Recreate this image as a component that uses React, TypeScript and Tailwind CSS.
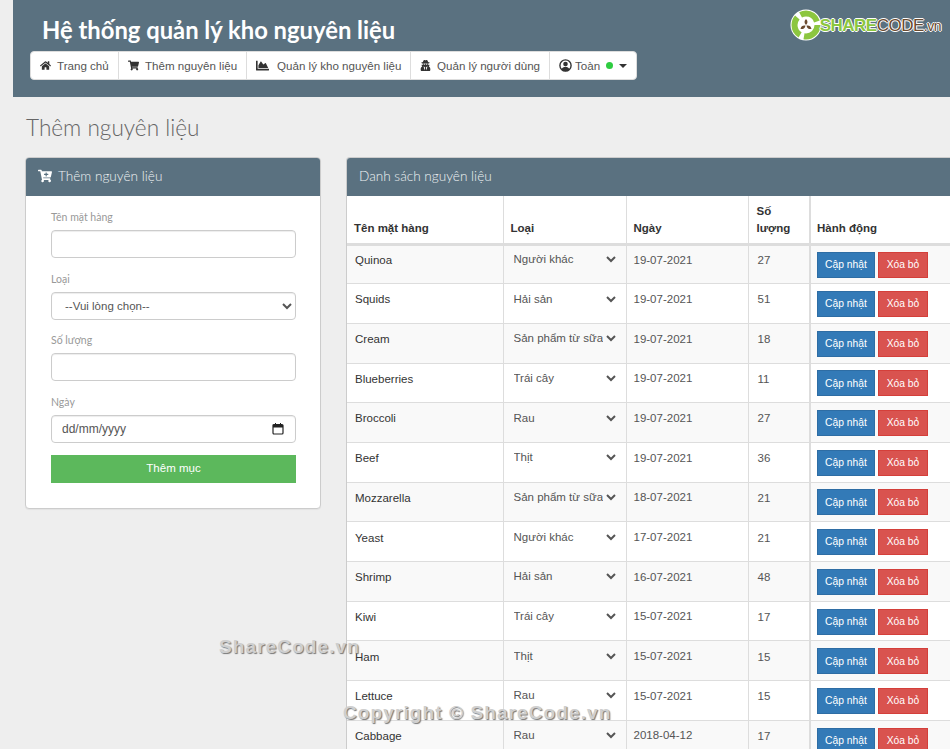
import { FaCartPlus, FaChartArea, FaHome, FaShoppingCart, FaUserSecret } from 'react-icons/fa'

const lato = 'font-["Lato","Open_Sans",sans-serif]'

const navItems = [
  { label: 'Trang chủ', icon: <FaHome className="text-[11px]" />, width: 'w-[88px]', gap: 'gap-[6px]' },
  { label: 'Thêm nguyên liệu', icon: <FaShoppingCart className="text-[11px]" />, width: 'w-[128px]', gap: 'gap-[6px]' },
  { label: 'Quản lý kho nguyên liệu', icon: <FaChartArea className="text-[13px]" />, width: 'w-[164px]', gap: 'gap-[8px]' },
  { label: 'Quản lý người dùng', icon: <FaUserSecret className="text-[11px]" />, width: 'w-[139px]', gap: 'gap-[6px]' },
]

const categories = ['Người khác', 'Hải sản', 'Sản phẩm từ sữa', 'Trái cây', 'Rau', 'Thịt']

const rows = [
  ['Quinoa', 'Người khác', '19-07-2021', '27'],
  ['Squids', 'Hải sản', '19-07-2021', '51'],
  ['Cream', 'Sản phẩm từ sữa', '19-07-2021', '18'],
  ['Blueberries', 'Trái cây', '19-07-2021', '11'],
  ['Broccoli', 'Rau', '19-07-2021', '27'],
  ['Beef', 'Thịt', '19-07-2021', '36'],
  ['Mozzarella', 'Sản phẩm từ sữa', '18-07-2021', '21'],
  ['Yeast', 'Người khác', '17-07-2021', '21'],
  ['Shrimp', 'Hải sản', '16-07-2021', '48'],
  ['Kiwi', 'Trái cây', '15-07-2021', '17'],
  ['Ham', 'Thịt', '15-07-2021', '15'],
  ['Lettuce', 'Rau', '15-07-2021', '15'],
  ['Cabbage', 'Rau', '2018-04-12', '17'],
]

function Logo() {
  return (
    <div className="flex items-center">
      <svg width="32" height="32" viewBox="0 0 32 32">
        <circle cx="16" cy="16" r="15.500" fill="#fff" />
        <circle cx="16" cy="16" r="11.500" fill="none" stroke="#8cc63f" strokeWidth="6" strokeDasharray="20 4.100" />
        <circle cx="16" cy="16" r="7" fill="#fff" />
        <path d="M16 10c2 2 2 4 0 6-2-2-2-4 0-6zM10.500 20c.5-3 2.500-4 5-3.500-.5 3-2.500 4-5 3.500zM21.500 20c-.5-3-2.500-4-5-3.500.5 3 2.500 4 5 3.500z" fill="#6b4a2f" />
      </svg>
      <span className='ml-[-2px] font-["Liberation_Sans",Arial,sans-serif] text-[17px] leading-none tracking-[-0.5px] [text-shadow:1px_0_0_#fff,-1px_0_0_#fff,0_1px_0_#fff,0_-1px_0_#fff]'>
        <span className="font-bold text-[#8cc63f]">SHARE</span>
        <span className="text-[#6b4a2f]">CODE</span>
        <span className="text-[14px] text-[#6b4a2f]">.vn</span>
      </span>
    </div>
  )
}

function UserIcon() {
  return (
    <svg width="13" height="13" viewBox="0 0 13 13" className="mr-[3px] text-[#333]">
      <circle cx="6.500" cy="6.500" r="5.600" fill="none" stroke="currentColor" strokeWidth="1.400" />
      <circle cx="6.500" cy="5" r="2.300" fill="currentColor" />
      <path d="M2.600 10.600c.5-2 2-2.900 3.900-2.900s3.400.9 3.900 2.900c-1 1-2.400 1.600-3.900 1.600s-2.900-.6-3.900-1.600z" fill="currentColor" />
    </svg>
  )
}

function Field({ label, children }: { label: string; children: React.ReactNode }) {
  return (
    <div className="mb-[13.500px]">
      <label className={`${lato} mb-[6px] block h-[14px] text-[10.500px] leading-[14px] text-[#999]`}>{label}</label>
      {children}
    </div>
  )
}

const inputClass = 'block h-[28px] w-full rounded-[4px] border border-[#ccc] bg-white text-[11.500px] text-[#555] shadow-[inset_0_1px_1px_rgba(0,0,0,0.075)]'

function AddForm() {
  return (
    <div className="w-[296px] shrink-0 self-start overflow-hidden rounded-[4px] border border-[#ccc] bg-white shadow-[0_1px_1px_rgba(0,0,0,0.05)]">
      <div className={`${lato} flex h-[38px] items-center gap-[6px] bg-[#5a7180] pb-[2px] pl-[12px] text-[13.600px] font-light text-[#eef1f3]`}>
        <FaCartPlus className="text-[14px] text-white" />
        Thêm nguyên liệu
      </div>
      <div className="pl-[25px] pr-[24px] pt-[14px] pb-[25px]">
        <Field label="Tên mặt hàng">
          <input className={inputClass} />
        </Field>
        <Field label="Loại">
          <select className={`${inputClass} pl-[9px]`} defaultValue="">
            <option value="">--Vui lòng chọn--</option>
            {categories.map((c) => (
              <option key={c}>{c}</option>
            ))}
          </select>
        </Field>
        <Field label="Số lượng">
          <input className={inputClass} />
        </Field>
        <Field label="Ngày">
          <div className="relative">
            <input type="text" placeholder="dd/mm/yyyy" className={`${inputClass} pl-[10px] text-[12px] placeholder:text-[#555]`} />
            <svg width="12" height="12" viewBox="0 0 12 12" className="absolute right-[12px] top-[8px]">
              <rect x="1" y="1.500" width="10" height="9.500" rx="1" fill="none" stroke="#222" strokeWidth="1.200" />
              <rect x="1" y="2" width="10" height="2.500" fill="#222" />
              <path d="M3.500 0v2M8.500 0v2" stroke="#222" strokeWidth="1" />
            </svg>
          </div>
        </Field>
        <button className="mt-[-1px] block h-[28px] w-full bg-[#5cb85c] text-[11.500px] text-white">Thêm mục</button>
      </div>
    </div>
  )
}

function ItemTable() {
  return (
    <div className="w-[640px] shrink-0 self-start rounded-t-[4px] border-x border-t border-[#ccc] bg-white">
      <div className={`${lato} flex h-[38px] items-center rounded-t-[3px] bg-[#5a7180] pb-[2px] pl-[12px] text-[13.600px] font-light text-[#eef1f3]`}>
        Danh sách nguyên liệu
      </div>
      <table className="w-full table-fixed border-collapse text-[11.500px] text-[#333]">
        <colgroup>
          <col className="w-[156px]" />
          <col className="w-[123px]" />
          <col className="w-[122px]" />
          <col className="w-[62px]" />
          <col />
        </colgroup>
        <thead>
          <tr className="h-[48px] border-b-[3px] border-[#ddd]">
            <th className="border-r border-[#ddd] px-[7px] pb-[5px] text-left align-bottom font-bold">Tên mặt hàng</th>
            <th className="border-r border-[#ddd] px-[7px] pb-[5px] text-left align-bottom font-bold">Loại</th>
            <th className="border-r border-[#ddd] px-[7px] pb-[5px] text-left align-bottom font-bold">Ngày</th>
            <th className="border-r-2 border-[#ddd] px-[8px] pb-[6px] text-left align-bottom font-bold leading-[17px]">Số lượng</th>
            <th className="px-[6px] pb-[5px] text-left align-bottom font-bold">Hành động</th>
          </tr>
        </thead>
        <tbody>
          {rows.map((row) => (
            <tr key={row[0]} className="h-[39.700px] border-b border-[#ddd] odd:bg-[#f9f9f9]">
              <td className="border-r border-[#ddd] px-[8px] align-middle">
                <div className="mt-[-7px]">{row[0]}</div>
              </td>
              <td className="border-r border-[#ddd] pl-[2px] pr-[7px] align-middle">
                <select defaultValue={row[1]} className="mt-[-10px] block h-[24px] w-full bg-transparent pl-[4px] text-[11.500px] text-[#555]">
                  {categories.map((c) => (
                    <option key={c}>{c}</option>
                  ))}
                </select>
              </td>
              <td className="border-r border-[#ddd] px-[7px] align-middle text-[#555]">
                <div className="mt-[-8px]">{row[2]}</div>
              </td>
              <td className="border-r-2 border-[#ddd] px-[9px] align-middle text-[#555]">
                <div className="mt-[-7px]">{row[3]}</div>
              </td>
              <td className="px-[6px] align-middle">
                <div className="flex gap-[3px] pt-[1px]">
                  <button className="h-[26px] w-[58px] border border-[#2e6da4] bg-[#337ab7] text-[10.300px] text-white">Cập nhật</button>
                  <button className="h-[26px] w-[50px] border border-[#d43f3a] bg-[#d9534f] text-[10.300px] text-white">Xóa bỏ</button>
                </div>
              </td>
            </tr>
          ))}
        </tbody>
      </table>
    </div>
  )
}

export default function App() {
  return (
    <div className='relative h-[749px] w-[950px] overflow-hidden bg-[#eee] font-["Liberation_Sans",Arial,sans-serif]'>
      <header className="relative ml-[13px] h-[97px] bg-[#5a7180] pl-[17px] pt-[15px]">
        <h1 className={`${lato} ml-[12px] mb-[6px] h-[30px] text-[23.800px] font-bold leading-[30px] text-white`}>Hệ thống quản lý kho nguyên liệu</h1>
        <nav className="flex h-[29px] w-[607px] items-center rounded-[4px] border border-[#ddd] bg-white text-[11.600px] text-[#555]">
          {navItems.map((item) => (
            <a key={item.label} className={`${item.width} ${item.gap} flex h-full items-center border-r border-[#ddd] pl-[9px]`}>
              <span className="text-[#333]">{item.icon}</span>
              {item.label}
            </a>
          ))}
          <a className="flex h-full items-center pl-[9px]">
            <UserIcon />
            Toàn
            <span className="ml-[6px] h-[7px] w-[7px] rounded-full bg-[#2ecc40]" />
            <span className="ml-[6px] h-0 w-0 border-x-[4px] border-t-[4px] border-x-transparent border-t-[#333]" />
          </a>
        </nav>
        <div className="absolute right-[9px] top-[9px]">
          <Logo />
        </div>
      </header>

      <h2 className={`${lato} ml-[26px] mt-[16px] mb-[14px] h-[30px] text-[22.600px] font-light leading-[30px] text-[#666]`}>Thêm nguyên liệu</h2>

      <main className="ml-[25px] flex gap-[25px]">
        <AddForm />
        <ItemTable />
      </main>

      <div className="absolute left-[219px] top-[633px] text-[19px] font-bold tracking-[1.100px] text-[#cfcfcf] [text-shadow:1px_1px_1px_#777]">ShareCode.vn</div>
      <div className="absolute left-[343px] top-[699px] text-[19px] font-bold tracking-[1.100px] text-[#cfcfcf] [text-shadow:1px_1px_1px_#777]">Copyright © ShareCode.vn</div>
    </div>
  )
}
